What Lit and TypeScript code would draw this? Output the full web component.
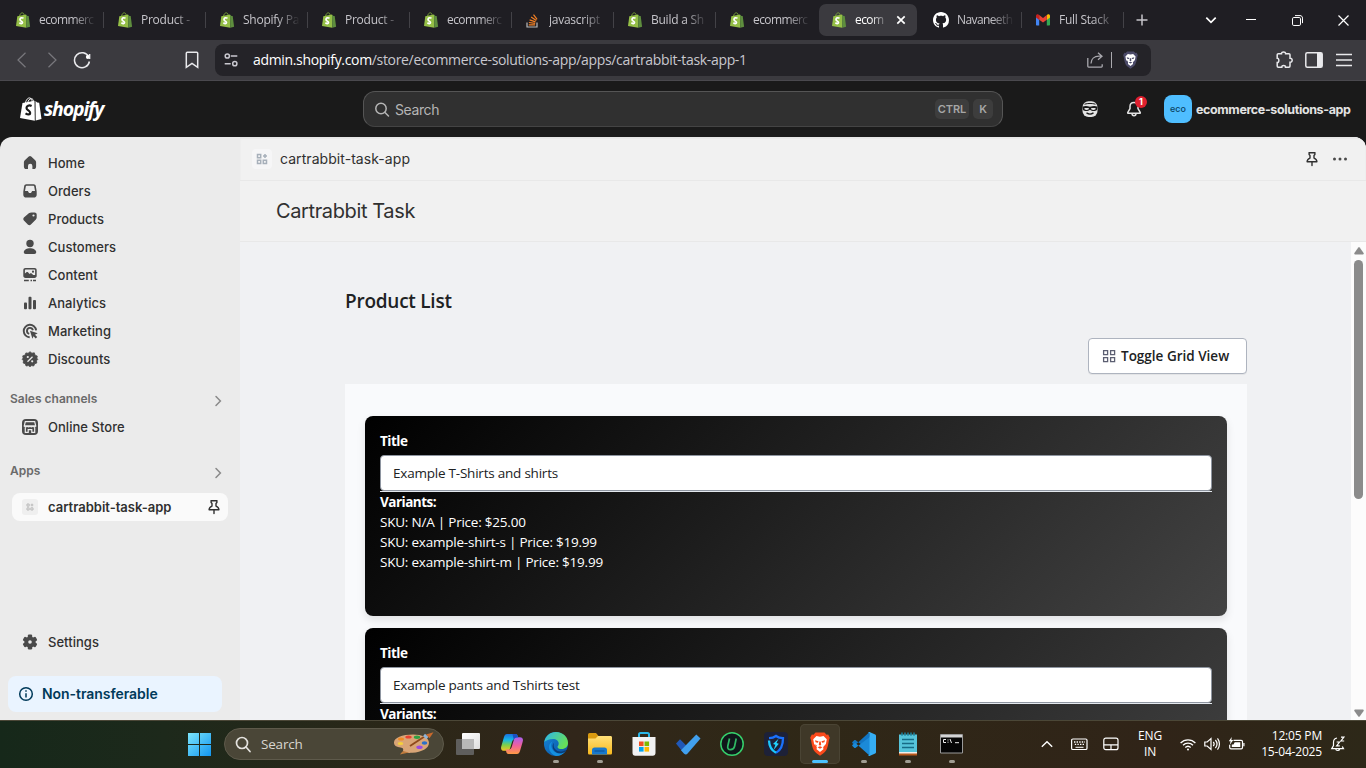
import { LitElement, html, css, svg } from "lit";
import { customElement } from "lit/decorators.js";
import { classMap } from "lit/directives/class-map.js";

const bag = html`<svg width="16" height="16" viewBox="0 0 16 16">
  <path d="M4.6 4.2C4.9 1.9 6.3.6 7.6.9c1.2.2 1.5 1.5 1.6 2.7" fill="none" stroke="#7da93a" stroke-width=".9"/>
  <path d="M2.3 4.3 11 2.6l.3 13.2L1 13.9z" fill="#95bf47"/>
  <path d="m11 2.6 1.5 1.3 1.2.2 1.4 10.6-3.8 1.1z" fill="#5e8e3e"/>
  <path d="M8.500 6.200C6.800 5.300 5 5.900 5 7.500c0 1.600 2.500 1.600 2.500 3.100 0 1.300-1.700 1.200-3.100.2" fill="none" stroke="#fff" stroke-width="1.700"/>
</svg>`;

const stackIcon = html`<svg width="16" height="16" viewBox="0 0 16 16" fill="none">
  <path d="M2 10.500v4.500h10v-4.500" stroke="#bcbbbb" stroke-width="1.200"/>
  <path d="M3.800 12.900h6.300M3.900 10.500l6.300.8M4.600 7.900l5.900 2M6.100 5l5.200 3.500M8.500 2.700l3.600 4.600" stroke="#f48024" stroke-width="1.200"/>
</svg>`;

const githubIcon = html`<svg width="16" height="16" viewBox="0 0 16 16" fill="#fff"><path d="M8 0C3.580 0 0 3.580 0 8c0 3.540 2.290 6.530 5.470 7.590.4.070.55-.17.55-.38 0-.19-.01-.82-.01-1.490-2.010.37-2.530-.49-2.690-.94-.09-.23-.48-.94-.82-1.130-.28-.15-.68-.52-.01-.53.63-.01 1.080.58 1.230.82.72 1.210 1.870.87 2.330.66.070-.52.28-.87.51-1.070-1.780-.2-3.640-.89-3.640-3.950 0-.87.31-1.590.82-2.150-.08-.2-.36-1.020.08-2.120 0 0 .67-.21 2.200.82.64-.18 1.320-.27 2-.27s1.360.09 2 .27c1.530-1.040 2.200-.82 2.200-.82.44 1.100.16 1.920.08 2.120.51.56.82 1.270.82 2.150 0 3.070-1.870 3.750-3.650 3.950.29.25.54.73.54 1.480 0 1.070-.01 1.930-.01 2.200 0 .21.15.46.55.38A8.010 8.010 0 0 0 16 8c0-4.420-3.580-8-8-8z"/></svg>`;

const gmailIcon = html`<svg width="16" height="16" viewBox="0 0 16 16">
  <path d="M1 4v8.500c0 .6.400 1 1 1h2.200V6.500z" fill="#4285f4"/>
  <path d="M15 4v8.500c0 .6-.4 1-1 1h-2.200V6.500z" fill="#34a853"/>
  <path d="M11.800 3.300V7.900L15 5.500V4c0-1.700-1.800-2-2.700-1.300z" fill="#fbbc04"/>
  <path d="M1 4c0-1.700 1.800-2 2.700-1.300l.5.5v4.700L1 5.500z" fill="#c5221f"/>
  <path d="M4.200 3.100 8 6l3.800-2.900v4.600L8 10.500 4.200 7.700z" fill="#ea4335"/>
</svg>`;

const lion = (body: string, face: string, w: number, h: number) => html`<svg width=${w} height=${h} viewBox="0 0 20 24">
  <path d="M5.500.5h9l2 2.200 1.700-.3 1.600 3.400-.8 2.200c-.6 4-1.600 8.500-2.800 10.300C14.800 20.600 11.500 22.600 10 23.800 8.500 22.600 5.200 20.600 3.800 18.300 2.600 16.500 1.600 12 1 8L.2 5.800l1.600-3.400 1.700.3z" fill=${body}/>
  <path d="M6.500 4 10 4.800 13.500 4l3.300 3.300-.9 4.700-2.700 3.100.2 2.100-3.400 2.800-3.400-2.800.2-2.100L4.100 12l-.9-4.700z" fill=${face}/>
  <path d="m5 8.300 3.600 1-.7 1.500-2.300-.6zM15 8.300l-3.600 1 .7 1.500 2.300-.6zM9.300 9.500h1.400l.5 3.200-1.200 1-1.200-1zM7.600 15.200l2.400-.9 2.400.9-2.400 1.500zM4.800 12.200l2.100 1.400-.8.900z" fill=${body}/>
</svg>`;

const pin = html`<svg width="20" height="20" viewBox="0 0 20 20" fill="none" stroke="#303030" stroke-width="1.400" stroke-linejoin="round" stroke-linecap="round">
  <path d="M7 3.700h6M7.100 3.900v1.600l.9 1v2.600c-1.500.6-2.900 1.700-2.900 3.600h9.800c0-1.900-1.400-3-2.900-3.600V6.500l.9-1V3.900M10 12.900v3.600"/>
</svg>`;

const appGlyph = (size: number, color: string) => html`<svg width=${size} height=${size} viewBox="0 0 12 12" fill="none" stroke=${color} stroke-width="1.500">
  <path d="M1.500 1.500h3.200v3.200H1.500zM1.500 7.300h3.200v3.200H1.500zM7.300 7.300h3.200v3.200H7.300zM9 1v4M7 3h4"/>
</svg>`;

const nav = [
  { label: "Home", icon: svg`<path d="M8.800 3.500a1.800 1.800 0 0 1 2.400 0l4 3.700c.6.500.9 1.200.9 2v4.300c0 1.700-.9 2.600-2.500 2.600h-1.200v-3.200a2.200 2.200 0 0 0-4.400 0v3.200H6.400c-1.600 0-2.500-.9-2.500-2.600V9.200c0-.8.3-1.500.9-2z"/>` },
  { label: "Orders", icon: svg`<path fill-rule="evenodd" d="M6.300 3.200h7.400c1 0 1.900.8 2.100 1.800l.9 5.500v3.200c0 1.700-1.200 2.900-2.900 2.900H6.200c-1.700 0-2.900-1.200-2.900-2.900v-3.200L4.200 5c.2-1 1.100-1.800 2.100-1.800zm.2 1.600c-.4 0-.6.200-.7.600L5 10.100h2.500c.5 0 .6.500 1 1.100.3.600.8.900 1.500.9s1.200-.3 1.500-.9c.4-.6.500-1.100 1-1.100H15l-.8-4.700c-.1-.4-.3-.6-.7-.6z"/>` },
  { label: "Products", icon: svg`<path fill-rule="evenodd" d="M11.500 3.500h3.100c1.200 0 2.100.9 2.100 2.100v2.900c0 .8-.3 1.500-.8 2l-5 5c-.9.9-2.200.9-3.100 0L3.900 11.600c-.8-.8-.8-2.100 0-3l4.900-4.400c.8-.5 1.600-.7 2.700-.7zm2 4.100a1.100 1.100 0 1 0 0-2.200 1.100 1.100 0 0 0 0 2.200z"/>` },
  { label: "Customers", icon: svg`<circle cx="10" cy="6.500" r="3.700"/><path d="M10 11.300c3 0 6.200 1.500 6.200 4 0 1.200-.8 1.700-1.800 1.700H5.600c-1 0-1.800-.5-1.800-1.700 0-2.500 3.200-4 6.200-4z"/>` },
  { label: "Content", icon: svg`<path fill-rule="evenodd" d="M5.500 3h9c1.400 0 2.200.9 2.200 2.200v5.600c0 1.300-.8 2.200-2.200 2.200h-9c-1.400 0-2.200-.9-2.200-2.200V5.200C3.300 3.900 4.100 3 5.500 3zm.2 1.500c-.5 0-.8.300-.8.800v3.100l1.800-1.300c.5-.3 1-.2 1.300.2l1.500 1.600.9-.6c.4-.2.8-.2 1.200.1l1.600 1.500 1.900.1V5.300c0-.5-.3-.8-.8-.8zM13 7.800a1.100 1.100 0 1 0 0-2.200 1.100 1.100 0 0 0 0 2.200z"/><path d="M4 14.700h4.800v1.500H4zM10.500 14.700H12v1.500h-1.500zM13 14.700h3v1.500h-3z"/>` },
  { label: "Analytics", icon: svg`<rect x="4" y="9.500" width="3" height="6.700" rx=".9"/><rect x="8.500" y="3.800" width="3" height="12.400" rx=".9"/><rect x="13" y="7" width="3" height="9.200" rx=".9"/>` },
  { label: "Marketing", icon: svg`<g fill="none" stroke="#4a4a4a" stroke-width="1.900"><path d="M16.100 9.300A6.200 6.200 0 1 0 9.700 16.200"/><path d="M12.900 9.200a3 3 0 1 0-3.700 3.600"/></g><path d="m10 9.700 7.700 2.600-2.700 1.400 2.200 2.200-1.500 1.500-2.200-2.200-1.100 2.500z"/>` },
  { label: "Discounts", icon: svg`<path stroke="#4a4a4a" stroke-width=".8" stroke-linejoin="round" d="m10 2.700 1.900 1.500 2.400-.4.800 2.400 2.200.9-.5 2.100 1 1.100-1.300 1.500.3 2.200-2.100.8-1 2.200-2.100-.4L10 17.700l-1.600-1.100-2.300.4-.8-2.200-2.100-.8.3-2.200-1.300-1.500 1-1.300-.5-2.100 2.400-.8.8-2.200 2.200.4z"/><path d="m7.500 12.700 5-5" stroke="#ebebeb" stroke-width="1.300"/><circle cx="7.800" cy="8" r="1.100" fill="#ebebeb"/><circle cx="12.200" cy="12.300" r="1.100" fill="#ebebeb"/>` },
];

const gearTeeth = [0, 60, 120, 180, 240, 300];
const gear = svg`${gearTeeth.map((a) => svg`<rect x="7.800" y="2.600" width="4.400" height="4.600" rx="1.200" transform=${`rotate(${a} 10 10)`}/>`)}<circle cx="10" cy="10" r="3.700" fill="none" stroke="#4a4a4a" stroke-width="3.800"/>`;

const tabs: { icon: unknown; label: string; active?: boolean; bare?: boolean; tight?: boolean }[] = [
  { icon: bag, label: "ecommerc", tight: true },
  { icon: bag, label: "Product - " },
  { icon: bag, label: "Shopify Pa" },
  { icon: bag, label: "Product - " },
  { icon: bag, label: "ecommerc", tight: true },
  { icon: stackIcon, label: "javascript" },
  { icon: bag, label: "Build a Sh" },
  { icon: bag, label: "ecommerc", bare: true, tight: true },
  { icon: bag, label: "ecom", active: true, bare: true, tight: true },
  { icon: githubIcon, label: "Navaneeth", tight: true },
  { icon: gmailIcon, label: "Full Stack" },
];

const products = [
  { title: "Example T-Shirts and shirts", variants: [["N/A", "25.00"], ["example-shirt-s", "19.99"], ["example-shirt-m", "19.99"]] },
  { title: "Example pants and Tshirts test", variants: [] },
];

const dock: { icon: unknown; state: string }[] = [
  { state: "", icon: html`<svg width="26" height="26" viewBox="0 0 26 26"><defs><linearGradient id="tv" x2="1" y2="1"><stop stop-color="#fff"/><stop offset="1" stop-color="#ddd"/></linearGradient></defs><rect x="7" y="2" width="18" height="16" rx="1" fill="url(#tv)"/><rect x="1" y="8" width="18" height="16" rx="1" fill="#666" fill-opacity=".88"/><path d="M7 8h12v10H7z" fill="#b8b8b8"/></svg>` },
  { state: "", icon: html`<svg width="24" height="24" viewBox="0 0 24 24"><defs><linearGradient id="c1" x2="0" y2="1"><stop stop-color="#1a6fe0"/><stop offset=".35" stop-color="#16b8e8"/><stop offset=".65" stop-color="#7bd04a"/><stop offset="1" stop-color="#f5c622"/></linearGradient><linearGradient id="c2" x2="0" y2="1"><stop stop-color="#a960f0"/><stop offset=".5" stop-color="#f0609c"/><stop offset="1" stop-color="#ff9a44"/></linearGradient></defs>
    <path d="M7 2h8.500c1.500 0 2 1 2.300 2.500L18.500 7h-3c-2 0-2.900 1-3.500 3l-1.800 6c-.6 2-1.500 2.800-3.200 2.800H4c-2.500 0-3.500-2-2.700-4.500L4 5c.6-2 1.500-3 3-3z" fill="url(#c1)"/>
    <path d="M17 22H8.500C7 22 6.500 21 6.200 19.500L5.700 17.500h3c2 0 2.700-1.500 3.300-3.500l1.800-6c.6-2 1.500-2.800 3.200-2.800H20c2.500 0 3.500 2 2.700 4.500L20 19c-.6 2-1.500 3-3 3z" fill="url(#c2)"/><path d="M12.500 2h3c1.500 0 2 1 2.300 2.500l.4 1.200c-2.400-.4-3.500.3-4.400 2.300z" fill="#1b4fc4"/></svg>` },
  { state: "run", icon: html`<svg width="24" height="24" viewBox="0 0 24 24"><defs><linearGradient id="e1" x2="1" y2=".5"><stop stop-color="#2bb5ef"/><stop offset="1" stop-color="#67df58"/></linearGradient><linearGradient id="e2" x2="1" y2="1"><stop stop-color="#1687d9"/><stop offset="1" stop-color="#0a4f9e"/></linearGradient></defs>
    <circle cx="12" cy="12" r="12" fill="url(#e2)"/><path d="M.3 10C1.300 4 6 0 12 0c7 0 12 5 12 11 0 3.800-2.800 6-6.200 6-2.800 0-4.300-1.100-4.300-2.100 0-.8 1.200-1.200 1.200-3.400C14.700 9 12.300 7 9 7 5 7 1.700 8.500.3 10z" fill="url(#e1)"/><path d="M8.700 9.500C6 12 7 18 12 20.500c3 1.500 7 1 9.500-1.500-2.200 3.300-5.700 5-9.500 5-3-.7-7-4-7-9 0-2.700 1.700-4.800 3.700-5.500z" fill="#1490df"/><path d="M10 11c-1.500 4 1.500 8.500 6.500 8.500 2.300 0 4.300-.6 5.600-1.500l-.6 1.500c-3 2.500-7.500 2.200-10 .2C8.500 17.500 7.600 13 10 11z" fill="#093d78"/></svg>` },
  { state: "run", icon: html`<svg width="26" height="26" viewBox="0 0 26 26"><defs><linearGradient id="f1" x2="0" y2="1"><stop stop-color="#ffe07a"/><stop offset="1" stop-color="#f9b91d"/></linearGradient></defs><path d="M1 4c0-1.200.6-2 1.600-2H9l2.500 3h5V9H1z" fill="#d99a10"/><path d="M1 7.500h7.500L11 5h12.500c1 0 1.500.6 1.500 1.500V22c0 1-.6 1.500-1.500 1.500h-21C1.600 23.500 1 23 1 22z" fill="url(#f1)"/><path d="M5 23.500V19c0-1.600 1-2.500 2.500-2.500h10c1.600 0 2.500 1 2.500 2.500v4.500z" fill="#1878cc"/><path d="M7.500 19.500h10v1h-10z" fill="#0b4d91"/></svg>` },
  { state: "", icon: html`<svg width="26" height="26" viewBox="0 0 26 26"><path d="M8 7V3.500C8 2.600 8.600 2 9.500 2h7c.9 0 1.500.6 1.500 1.500V7" fill="none" stroke="#29b6e8" stroke-width="2"/><path d="M1.500 6h23v16c0 1.600-1 2.700-2.700 2.700H4.200c-1.700 0-2.700-1.100-2.700-2.700z" fill="#f1f1f2"/><path d="M8 10.500h4.600v4.600H8z" fill="#f25022"/><path d="M13.500 10.500h4.600v4.600h-4.600z" fill="#7fba00"/><path d="M8 16h4.600v4.600H8z" fill="#00a4ef"/><path d="M13.500 16h4.600v4.600h-4.600z" fill="#ffb900"/></svg>` },
  { state: "", icon: html`<svg width="26" height="26" viewBox="0 0 26 26"><path d="m1 12.500 4-4.200 8 8-3.800 6.500z" fill="#2058b8"/><path d="m6 19.300 4.100-4.300L21.300 3.600 25.500 7.600 12.600 22.500c-1 1.100-2.400 1.200-3.400.2z" fill="#41a0ee"/></svg>` },
  { state: "", icon: html`<svg width="24" height="24" viewBox="0 0 24 24" fill="none"><circle cx="12" cy="12" r="11.200" fill="#10171a" stroke="#36d06c" stroke-width="1.500"/><path d="M9.500 6.500 7.800 14c-.5 2.300.6 3.600 2.700 3.600s3.600-1.200 4.100-3.400L16.200 6.500" stroke="#2fb863" stroke-width="1.700"/></svg>` },
  { state: "", icon: html`<svg width="24" height="24" viewBox="0 0 24 24" fill="none"><rect width="24" height="24" rx="4" fill="#1d2138"/><path d="M5 6.200c3 0 5-.6 7-2.200 2 1.600 4 2.200 7 2.200 0 7-1.500 11.500-7 14.500" stroke="#1a72ff" stroke-width="2.300"/><path d="M12 20.700C7 18.200 5.200 14 5 8.500" stroke="#19c8ff" stroke-width="2.300"/><path d="M14.500 6.800 9 12l2.400.8L9.600 18l5.200-6.300-2.300-.7z" fill="#22d5ff"/></svg>` },
  { state: "on", icon: lion("#fb4a1c", "#fff", 20, 24) },
  { state: "run", icon: html`<svg width="26" height="26" viewBox="0 0 26 26"><path d="M18.500 1 4 14.200 1.500 12.200c-.5-.4-.5-.9-.1-1.300l1.800-1.700c.4-.4.8-.4 1.200-.1L20 21z" fill="#1276c4"/><path d="M19 25 4.200 11.700 1.500 13.800c-.5.400-.5.900-.1 1.300l1.800 1.700c.4.400.8.400 1.200.1L20 5z" fill="#1b8ad8"/><path d="m18.500 1 5.700 2.600c.5.200.8.600.8 1.200v16.400c0 .6-.3 1-.8 1.200L18.500 25c-.6.200-1 0-1.300-.3l1.300-1.200V2.500L17.200 1.300c.3-.3.7-.5 1.300-.3z" fill="#35aef5"/></svg>` },
  { state: "run", icon: html`<svg width="20" height="24" viewBox="0 0 20 24"><path d="M1 21h18v2.500H1z" fill="#b8581c"/><path d="M1 19h18v2.500H1z" fill="#f2ede8"/><path d="M1 2.500h18V20H1z" fill="#56c4da"/><path d="M4 .5v3.200M7 .5v3.200M10 .5v3.200M13 .5v3.200M16 .5v3.200" stroke="#1b83a0" stroke-width="1.500"/><path d="M4 7.500h12M4 11.500h12M4 15.500h12" stroke="#176b86" stroke-width="1.600"/></svg>` },
  { state: "run", icon: html`<svg width="24" height="20" viewBox="0 0 24 20"><path d="M.5.500h22v18.500H.5z" fill="#050505" stroke="#9a9a9a"/><path d="M1 1h21v2.500H1z" fill="#d4d4d4"/><path d="M6 5.500H3.500v3H6M8 5.500v1M8 7.700v1M10 5l1.500 4M15 8.700h4" stroke="#eee" fill="none"/></svg>` },
];

@customElement("app-root")
export class AppRoot extends LitElement {
  static styles = css`
    :host { display: block; width: 1366px; height: 768px; overflow: hidden; }
    * { box-sizing: border-box; }
    svg { display: block; flex: none; }
    .screen { display: flex; flex-direction: column; height: 768px; background: #1a1a1a; font-family: "Open Sans", "Noto Sans", sans-serif; }
    .center { display: flex; align-items: center; justify-content: center; flex: none; }

    .tabs { display: flex; height: 40px; padding: 4px 0 4px 2px; background: #1f1e23; flex: none; }
    .tab { display: flex; align-items: center; width: 102px; height: 32px; padding-left: 13px; flex: none; }
    .tab .name { width: 60px; margin-left: 8px; white-space: pre; font-size: 12px; letter-spacing: -0.25px; line-height: 20px; color: #c6c5ca; mask-image: linear-gradient(90deg, #000 34px, transparent 57px); }
    .tab .tight { letter-spacing: -0.6px; }
    .rule { width: 1px; height: 16px; background: #434247; margin-left: auto; flex: none; }
    .active { width: 98px; margin: 0 3px 0 1px; padding-left: 12px; background: #3b3a3f; border-radius: 7px; }
    .tab.active .name { width: 32px; color: #fff; mask-image: linear-gradient(90deg, #000 16px, transparent 34px); }
    .cross { margin-left: 9px; }
    .newtab { width: 36px; }
    .grow { flex: 1; }
    .win { width: 46px; }
    .menu { width: 40px; margin-right: -3px; }

    .toolbar { display: flex; align-items: center; height: 41px; padding: 0 7px; background: #3b3a3f; border-bottom: 1px solid #4a494e; flex: none; }
    .tool { width: 30px; height: 30px; }
    .book { margin-left: 80px; }
    .address { display: flex; align-items: center; width: 936px; height: 32px; margin-left: 8px; padding: 0 13px 0 7px; border-radius: 8px; background: #242328; flex: none; }
    .url { margin-left: 13px; font-size: 14px; letter-spacing: -0.33px; line-height: 20px; color: #c9c8cf; }
    .url b { font-weight: 400; color: #fff; }
    .split { width: 1px; height: 16px; background: #aaa9ae; margin: 0 11px 0 8px; }

    .header { display: flex; align-items: center; height: 56px; flex: none; font-family: Inter, sans-serif; color: #e3e3e3; }
    .brand { display: flex; align-items: center; width: 363px; padding-left: 20px; }
    .brand span { margin-left: 2px; font: italic 700 19.500px/24px "Open Sans", sans-serif; letter-spacing: -1.150px; color: #fff; }
    .search { display: flex; align-items: center; width: 640px; height: 36px; padding: 0 9px 0 10px; border: 1px solid #555; border-bottom-color: #444; border-radius: 12px; background: #303030; color: #b5b5b5; font-size: 14px; letter-spacing: -0.4px; flex: none; }
    .search span { margin-left: 4px; flex: 1; }
    .key { height: 20px; border-radius: 5px; background: #3d3d3d; color: #a6a6a6; font: 600 11px/20px Inter, sans-serif; letter-spacing: -0.1px; text-align: center; width: 20px; margin-left: 4px; }
    .ctrl { width: 34px; }
    .kit { width: 44px; height: 36px; position: relative; }
    .first { margin-left: 65px; }
    .badge { position: absolute; left: 23px; top: 5px; width: 12px; height: 12px; border-radius: 6px; background: #e0202f; color: #fff; font: 700 9px/12px Inter, sans-serif; text-align: center; }
    .avatar { width: 28px; height: 28px; margin-left: 8px; border-radius: 8px; background: #4fbeff; color: #0b4364; font: 500 9px/28px Inter, sans-serif; text-align: center; flex: none; }
    .store { margin-left: 4px; font-size: 12.500px; font-weight: 650; letter-spacing: -0.38px; white-space: nowrap; }

    .frame { display: flex; height: 583px; border-radius: 12px 12px 0 0; overflow: hidden; background: #ebebeb; flex: none; font-family: Inter, sans-serif; }
    .side { width: 240px; display: flex; flex-direction: column; padding-top: 12px; color: #303030; font-size: 13px; font-weight: 550; flex: none; }
    .row { display: flex; align-items: center; height: 28px; padding-left: 20px; letter-spacing: 0.04px; flex: none; }
    .row > span { margin-left: 8px; }
    .group { display: flex; align-items: center; height: 28px; padding: 0 12px 2px 10px; color: #6a6a6a; font-size: 12px; font-weight: 600; letter-spacing: 0; justify-content: space-between; flex: none; }
    .group svg { margin-top: 6px; }
    .channels { margin-top: 12px; }
    .apps { margin-top: 16px; }
    .current { width: 216px; margin: 8px 0 0 12px; padding: 0 4px 0 10px; border-radius: 8px; background: #fafafa; font-weight: 600; letter-spacing: 0; justify-content: space-between; }
    .chip { width: 16px; height: 16px; border-radius: 3px; background: #efefef; }
    .current > span:nth-child(2) { margin-left: 10px; flex: 1; }
    .settings { margin-top: 107px; }
    .notice { display: flex; align-items: center; width: 214px; height: 36px; margin: 20px 0 0 8px; padding-left: 8px; border-radius: 8px; background: #eaf4ff; color: #003a5a; font-size: 14px; font-weight: 600; letter-spacing: -0.05px; flex: none; }
    .notice span { margin-left: 6px; padding-bottom: 1px; }

    .main { flex: 1; display: flex; flex-direction: column; background: #f0f1f3; min-width: 0; }
    .appbar { display: flex; align-items: center; height: 44px; padding: 0 16px 0 12px; background: #f1f1f1; border-bottom: 1px solid #e8e8e8; box-shadow: inset 0 2px 2px #0000000d; font-size: 14px; letter-spacing: 0.06px; color: #303030; flex: none; }
    .appbar .tile { width: 20px; height: 20px; border-radius: 4px; background: #f6f6f7; margin-right: 8px; }
    .dots { margin-left: 8px; }
    .titlebar { height: 61px; padding: 0 36px; background: #f1f1f1; border-bottom: 1px solid #e8e8e8; font-size: 20px; line-height: 60px; color: #303030; letter-spacing: -0.38px; flex: none; }
    .view { display: flex; height: 478px; font-family: "Open Sans", "Noto Sans", sans-serif; color: #202223; }
    .content { flex: 1; padding: 45px 104px 0 105px; height: 478px; overflow: hidden; }
    h1 { margin: 0; font-size: 19px; line-height: 28px; font-weight: 600; letter-spacing: -0.25px; }
    .action { display: flex; justify-content: flex-end; margin-top: 23px; }
    .toggle { display: flex; align-items: center; width: 159px; height: 36px; padding: 0 10px; border: 1px solid #aeb4bf; border-radius: 4px; background: #fff; box-shadow: 0 1px 0 #0000000d; font-size: 13.500px; font-weight: 600; letter-spacing: 0; white-space: nowrap; }
    .toggle span { margin-left: 2px; }
    .panel { display: flex; flex-direction: column; gap: 12px; margin-top: 10px; padding: 32px 20px; background: #f9fafc; }
    .card { height: 200px; padding: 15px; border-radius: 8px; background: linear-gradient(135deg, #000, #434343); box-shadow: 0 4px 8px #0000001a; color: #fff; font-size: 13.500px; line-height: 20px; letter-spacing: -0.22px; flex: none; }
    .card b { display: block; letter-spacing: -0.5px; font-size: 13.500px; }
    .field { height: 37px; margin-top: 4px; border-bottom: 1px solid #e3e8ee; }
    .field div { height: 36px; padding: 0 12px; border: 1px solid #8e95a0; border-radius: 4px; background: #fff; color: #202223; line-height: 35px; }

    .scroll { display: flex; flex-direction: column; align-items: center; width: 15px; background: #fcfcfc; padding: 5px 0 3px; }
    .thumb { width: 9px; height: 239px; margin-top: 5px; border-radius: 5px; background: #8b8b8b; }
    .down { margin-top: auto; }

    .taskbar { display: flex; align-items: center; height: 48px; padding: 0 0 1px 177px; border-top: 1px solid #4b4737; background: linear-gradient(90deg, #16281a 0, #1d291b 12%, #2c2718 30%, #31261a 42%, #2f2817 55%, #302418 85%, #2d2818 100%); color: #fff; flex: none; }
    .cell { width: 44px; height: 46px; position: relative; }
    .find { display: flex; align-items: center; width: 220px; height: 32px; margin: 0 2px 0 3px; padding: 0 8px 0 10px; border: 1px solid #5e5a4b; border-radius: 16px; background: #4a4637; font-size: 13.500px; letter-spacing: -0.2px; color: #d8d6d0; flex: none; }
    .find span { margin-left: 9px; flex: 1; }
    .on { width: 40px; height: 40px; margin: 0 2px; border-radius: 5px; background: #3f3828; box-shadow: inset 0 0 0 1px #4a4434; }
    .mark { position: absolute; left: 19px; bottom: 4px; width: 6px; height: 3px; border-radius: 2px; background: #a19d93; }
    .on .mark { left: 12px; bottom: 1px; width: 16px; background: #4cc2ff; }
    .tray { display: flex; align-items: center; margin-left: auto; padding-right: 18px; font-size: 12px; line-height: 16px; letter-spacing: -0.18px; }
    .icon { width: 32px; }
    .small { width: 24px; }
    .lang { width: 46px; margin-right: 3px; text-align: center; line-height: 16px; }
    .clock { width: 74px; text-align: right; white-space: nowrap; margin-right: 8px; }
  `;

  private chevron() {
    return html`<svg width="20" height="20" viewBox="0 0 20 20" fill="none" stroke="#8a8a8a" stroke-width="1.500" stroke-linecap="round"><path d="m8 5.500 4.400 4.500L8 14.500"/></svg>`;
  }

  private navIcon(shape: unknown) {
    return html`<svg width="20" height="20" viewBox="0 0 20 20" fill="#4a4a4a">${shape}</svg>`;
  }

  private browser() {
    return html`
      <div class="tabs">
        ${tabs.map((t) => html`<div class=${classMap({ tab: true, active: !!t.active })}>
          ${t.icon}<span class=${classMap({ name: true, tight: !!t.tight })}>${t.label}</span>
          ${t.active ? html`<svg class="cross" width="10" height="10" viewBox="0 0 10 10" stroke="#fff" stroke-width="1.700"><path d="m1.300 1.300 7.400 7.400M8.700 1.300 1.300 8.700"/></svg>` : ""}
          ${t.bare ? "" : html`<i class="rule"></i>`}
        </div>`)}
        <div class="center newtab"><svg width="12" height="12" viewBox="0 0 12 12" stroke="#c6c5ca" stroke-width="1.500"><path d="M6 .5v11M.5 6h11"/></svg></div>
        <div class="grow"></div>
        <div class="center menu"><svg width="12" height="12" viewBox="0 0 12 12" fill="none" stroke="#fff" stroke-width="1.700"><path d="m1.300 3.700 4.700 4.600 4.700-4.600"/></svg></div>
        <div class="center win"><svg width="10" height="10" viewBox="0 0 10 10" stroke="#fff"><path d="M0 4.500h10"/></svg></div>
        <div class="center win"><svg width="11" height="11" viewBox="0 0 11 11" fill="none" stroke="#fff"><rect x=".5" y="2.500" width="8" height="8" rx="1.300"/><path d="M3 .6h5c1.500 0 2.500 1 2.500 2.500v5"/></svg></div>
        <div class="center win"><svg width="11" height="11" viewBox="0 0 11 11" stroke="#fff" stroke-width="1.200"><path d="m.5.500 10 10M10.500.500l-10 10"/></svg></div>
      </div>
      <div class="toolbar">
        <div class="center tool"><svg width="16" height="16" viewBox="0 0 16 16" fill="none" stroke="#79787d" stroke-width="1.200"><path d="M11.500.800 4 8l7.500 7.200"/></svg></div>
        <div class="center tool"><svg width="16" height="16" viewBox="0 0 16 16" fill="none" stroke="#79787d" stroke-width="1.200"><path d="M4.500.800 12 8l-7.500 7.200"/></svg></div>
        <div class="center tool"><svg width="18" height="18" viewBox="0 0 18 18" fill="none" stroke="#e9e9ec" stroke-width="1.500"><path d="M15.700 5.800A7.500 7.500 0 1 0 16.400 10.500"/><circle cx="14.800" cy="6" r="1.900" fill="#fff" stroke="none"/><path d="M16.600 3v5"/></svg></div>
        <div class="center tool book"><svg width="14" height="18" viewBox="0 0 14 18" fill="none" stroke="#e9e9ec" stroke-width="1.500"><path d="M1.300 2.300c0-.7.400-1 1-1h9.400c.6 0 1 .3 1 1v14L7 12.300l-5.700 4z"/></svg></div>
        <div class="address">
          <svg width="18" height="18" viewBox="0 0 18 18" fill="none" stroke="#c9c8cf" stroke-width="1.500"><circle cx="5.300" cy="5" r="2.100"/><path d="M8.800 5h6.500M2.700 12.700h6"/><circle cx="12.800" cy="12.700" r="2.100"/></svg>
          <span class="url"><b>admin.shopify.com</b>/store/ecommerce-solutions-app/apps/cartrabbit-task-app-1</span>
          <span class="grow"></span>
          <svg width="16" height="16" viewBox="0 0 16 16" fill="none" stroke="#a9a8ae" stroke-width="1.300"><path d="M.8 6v8.300c0 .5.300.8.800.8h12.800c.5 0 .8-.3.800-.8v-2M4 11.500c0-4.500 3.300-7.300 8-7.300h2.500M11 .700l4 3.500-4 3.500"/></svg>
          <i class="split"></i>
          ${lion("#4b4a68", "#fff", 15, 18)}
        </div>
        <div class="grow"></div>
        <div class="center tool"><svg width="18" height="18" viewBox="0 0 18 18" fill="none" stroke="#e9e9ec" stroke-width="1.500"><path d="M3.300 2.700h3.200c-.2-2.400 4.300-2.400 4.100 0h3.300c.7 0 1.100.4 1.100 1.100v3.400c2.900-.2 2.900 4.300 0 4.100v3.800c0 .7-.4 1.100-1.100 1.100h-3.400c.2-2.400-3.900-2.400-3.700 0H3.300c-.7 0-1.100-.4-1.100-1.100v-3.500c2.200.2 2.200-4.500 0-4.300V3.800c0-.7.400-1.100 1.100-1.100z"/></svg></div>
        <div class="center tool"><svg width="18" height="16" viewBox="0 0 18 16"><rect x=".8" y=".8" width="16.400" height="14.400" rx="1.500" fill="none" stroke="#e9e9ec" stroke-width="1.500"/><path d="M12 1h5v14h-5z" fill="#e9e9ec"/></svg></div>
        <div class="center tool"><svg width="16" height="14" viewBox="0 0 16 14" stroke="#e9e9ec" stroke-width="1.500"><path d="M0 1.500h16M0 7h16M0 12.500h16"/></svg></div>
      </div>`;
  }

  private header() {
    return html`<div class="header">
      <div class="brand">
        <svg width="22" height="24" viewBox="0 0 22 24"><path d="M5.500 6C6 2.700 8 .6 9.900 1c1.700.3 2.200 2.200 2.300 4M7.700 5.500c.6-2.200 2-3.700 3.700-3.700 1.500 0 2 1.200 2.200 2.800" fill="none" stroke="#fff" stroke-width="1"/><path d="m2.500 6 12-2.200.3 20L0 21z" fill="#fff"/><path d="m15.500 4 1.700 1.500 2 .3L21.500 22l-5.800 1.600z" fill="#fff"/><path d="M11.600 9C9 7.800 6.500 8.800 6.500 11c0 2.400 3.700 2.500 3.700 4.900 0 2-2.400 1.900-4.700.4" fill="none" stroke="#1a1a1a" stroke-width="2.200"/></svg>
        <span>shopify</span>
      </div>
      <div class="search">
        <svg width="17" height="17" viewBox="0 0 17 17" fill="none" stroke="#b5b5b5" stroke-width="1.500" stroke-linecap="round"><circle cx="7" cy="7.500" r="5.200"/><path d="m11 11.500 3.500 3.500"/></svg>
        <span>Search</span><div class="key ctrl">CTRL</div><div class="key">K</div>
      </div>
      <div class="center kit first"><svg width="18" height="18" viewBox="0 0 18 18"><rect x="1.500" y="1.300" width="15" height="15.700" rx="6" fill="#e3e3e3"/><path d="M3.500 4.200c3.500-1 7.500-1 11 0" stroke="#1a1a1a" stroke-width="1" fill="none"/><path d="M1.300 6.700c2.200-.8 4.700-.8 7.700 0 3-.8 5.500-.8 7.700 0l-.8 3.300c-1.500 1.500-5.100 1.400-6.900-.3-1.800 1.700-5.400 1.800-6.900.3z" fill="#1a1a1a"/><path d="M3.500 7.900h4.300v1.400c-1.300.9-3.200.9-4.300 0zM10.200 7.900h4.300v1.400c-1.100.9-3 .9-4.300 0z" fill="#e3e3e3"/><path d="M5.500 12.900c2 1.300 5 1.300 7 0" stroke="#1a1a1a" stroke-width="1.300" fill="none"/></svg></div>
      <div class="center kit"><svg width="20" height="20" viewBox="0 0 20 20" fill="none" stroke="#e3e3e3" stroke-width="1.500" stroke-linejoin="round"><path d="M10 3.500c-2.500 0-4 1.800-4 4v2.200L3.800 13.300c-.3.600 0 1 .6 1h11.200c.6 0 .9-.4.6-1L14 9.700V7.500c0-2.200-1.500-4-4-4zM8 14.500c0 1.400.8 2.200 2 2.200s2-.8 2-2.200"/></svg><span class="badge">1</span></div>
      <div class="avatar">eco</div><div class="store">ecommerce-solutions-app</div>
    </div>`;
  }

  private sidebar() {
    return html`<div class="side">
      ${nav.map((n) => html`<div class="row">${this.navIcon(n.icon)}<span>${n.label}</span></div>`)}
      <div class="group channels">Sales channels${this.chevron()}</div>
      <div class="row"><svg width="20" height="20" viewBox="0 0 20 20" fill="none" stroke="#ebebeb" stroke-width="1.200"><rect x="2" y="2" width="16" height="16" rx="4" fill="#4a4a4a" stroke="none"/><path d="M5.300 4.600h9.400l1 4.200H4.300zM4.300 8.500c.2 2 2.700 2 2.900 0 .2 2 2.600 2 2.800 0 .2 2 2.600 2 2.800 0 .2 2 2.700 2 2.900 0M5.300 10.500v4.900h2.900v-2.700h3.600v2.700h2.900v-4.900"/></svg><span>Online Store</span></div>
      <div class="group apps">Apps${this.chevron()}</div>
      <div class="row current"><div class="center chip">${appGlyph(8, "#b9b9b9")}</div><span>cartrabbit-task-app</span>${pin}</div>
      <div class="row settings">${this.navIcon(gear)}<span>Settings</span></div>
      <div class="notice"><svg width="20" height="20" viewBox="0 0 20 20" fill="none" stroke="#003a5a" stroke-width="1.500"><circle cx="10" cy="10" r="6.300"/><path d="M10 9.300v4.200M10 6.300v1.500"/></svg><span>Non-transferable</span></div>
    </div>`;
  }

  private main() {
    return html`<div class="main">
      <div class="appbar"><div class="center tile">${appGlyph(12, "#a7b0ba")}</div>cartrabbit-task-app<span class="grow"></span>${pin}<svg class="dots" width="20" height="20" viewBox="0 0 20 20" fill="#4a4a4a"><circle cx="4.500" cy="10" r="1.500"/><circle cx="10" cy="10" r="1.500"/><circle cx="15.500" cy="10" r="1.500"/></svg></div>
      <div class="titlebar">Cartrabbit Task</div>
      <div class="view">
        <div class="content">
          <h1>Product List</h1>
          <div class="action"><div class="toggle"><svg width="20" height="20" viewBox="0 0 20 20" fill="none" stroke="#5c5f72" stroke-width="1.300"><path d="M4.600 4.600h4v4h-4zM11.600 4.600h4v4h-4zM4.600 11.600h4v4h-4zM11.600 11.600h4v4h-4z"/></svg><span>Toggle Grid View</span></div></div>
          <div class="panel">
            ${products.map((p) => html`<div class="card">
              <b>Title</b>
              <div class="field"><div>${p.title}</div></div>
              <b>Variants:</b>
              ${p.variants.map(([sku, price]) => html`<div>SKU: ${sku} | Price: $${price}</div>`)}
            </div>`)}
          </div>
        </div>
        <div class="scroll">
          <svg width="10" height="8" viewBox="0 0 10 8" fill="#8b8b8b"><path d="M4.300.6c.4-.5 1-.5 1.400 0L9.600 6c.4.700.1 1.500-.7 1.500H1.100C.3 7.500 0 6.700.400 6z"/></svg>
          <div class="thumb"></div>
          <svg class="down" width="10" height="8" viewBox="0 0 10 8" fill="#8b8b8b"><path d="M4.300 7.400c.4.500 1 .5 1.400 0L9.600 2c.4-.7.1-1.500-.7-1.500H1.100C.3.500 0 1.300.4 2z"/></svg>
        </div>
      </div>
    </div>`;
  }

  private taskbar() {
    return html`<div class="taskbar">
      <div class="center cell"><svg width="24" height="24" viewBox="0 0 24 24"><defs><linearGradient id="w" gradientUnits="userSpaceOnUse" x2="24" y2="24"><stop stop-color="#80e8fb"/><stop offset="1" stop-color="#1296f0"/></linearGradient></defs><path d="M1 1h11v11H1zM13 1h11v11H13zM1 13h11v11H1zM13 13h11v11H13z" fill="url(#w)"/></svg></div>
      <div class="find">
        <svg width="17" height="17" viewBox="0 0 17 17" fill="none" stroke="#e4e2de" stroke-width="1.700" stroke-linecap="round"><circle cx="7" cy="7" r="5.500"/><path d="m11 11 4 4.500"/></svg>
        <span>Search</span>
        <svg width="42" height="24" viewBox="0 0 42 24"><path d="M20 2.500C9 2.500 1 6 1 10.500 1 14 4 15 7.500 15.500c3 .4 3 1.700 2.500 3.500 2 2.300 6 2 9.500 1.800 9-.5 16.500-4.300 16.500-10C36 5.500 29 2.500 20 2.500z" fill="#d9a577"/><path d="M10 19c-.6 1-2.200 1.800-3 3.500l9-1.900z" fill="#c07b3d"/><ellipse cx="8" cy="7" rx="3" ry="1.600" fill="#f08a24"/><ellipse cx="15.500" cy="5" rx="3.200" ry="1.600" fill="#e8412f"/><ellipse cx="24" cy="5.300" rx="3.200" ry="1.700" fill="#2ea043"/><ellipse cx="7.500" cy="11.500" rx="2.800" ry="1.600" fill="#f5d03a"/><ellipse cx="31.500" cy="11" rx="2.800" ry="1.700" fill="#2a70c8"/><ellipse cx="26.500" cy="15.200" rx="3.200" ry="1.800" fill="#9a4ae0"/><path d="M17 14 33 3.500" stroke="#8e4a1c" stroke-width="1.800"/><path d="m31 3 3.500 3" stroke="#8fb4d8" stroke-width="3"/><path d="m33 2.500 7.500-2.300-4 6z" fill="#c96a2d"/></svg>
      </div>
      ${dock.map((d) => html`<div class=${classMap({ center: true, cell: true, on: d.state === "on" })}>${d.icon}${d.state ? html`<i class="mark"></i>` : ""}</div>`)}
      <div class="tray">
        <div class="center icon"><svg width="12" height="8" viewBox="0 0 12 8" fill="none" stroke="#fff" stroke-width="1.400"><path d="m.8 6.700 5.200-5 5.200 5"/></svg></div>
        <div class="center icon"><svg width="17" height="13" viewBox="0 0 17 13" fill="none" stroke="#fff"><rect x=".6" y="1" width="15.400" height="10.500" rx="1.300" stroke-width="1.200"/><path d="M3 4h11M3.800 6.300h10" stroke-dasharray="1.400 1.200" stroke-width="1.300"/><path d="M4.500 9.300h8"/></svg></div>
        <div class="center icon"><svg width="16" height="14" viewBox="0 0 16 14" fill="none" stroke="#fff" stroke-width="1.200"><rect x=".8" y="1.200" width="14.200" height="11.500" rx="2"/><path d="M.8 7.800h14.200M8 7.800v5"/></svg></div>
        <div class="lang">ENG<br>IN</div>
        <div class="center icon small"><svg width="16" height="13" viewBox="0 0 16 13" fill="none" stroke="#fff" stroke-width="1.300"><path d="M.6 5A10.300 10.300 0 0 1 15.400 5M3 7.300a7 7 0 0 1 10 0M5.300 9.500a3.900 3.900 0 0 1 5.400 0"/><circle cx="8" cy="11.500" r="1" fill="#fff" stroke="none"/></svg></div>
        <div class="center icon small"><svg width="17" height="14" viewBox="0 0 17 14" fill="none" stroke="#fff" stroke-width="1.200"><path d="M.8 5h2.400L7 1.500v11L3.200 9H.8zM9.300 4.800c1 1.300 1 3.100 0 4.400M11.400 3c1.900 2.300 1.900 5.700 0 8M13.500 1.300c2.600 3.300 2.600 8.100 0 11.400"/></svg></div>
        <div class="center icon small"><svg width="17" height="14" viewBox="0 0 17 14" fill="none" stroke="#fff" stroke-width="1.200"><path d="M5.500 3.300h7.700c.8 0 1.300.5 1.300 1.300v6c0 .8-.5 1.300-1.300 1.300H3c-.8 0-1.300-.5-1.300-1.300V7.700"/><path d="M15.900 6v3.200"/><path d="M6.700 5.200h5.600v4.900H3.800V7.500h1.700z" fill="#fff" stroke="none"/><path d="M3.700 0 .8 4.300h1.800L1.800 7.700 5.300 3H3.400z" fill="#fff" stroke="none"/></svg></div>
        <div class="clock">12:05 PM<br>15-04-2025</div>
        <svg width="18" height="17" viewBox="0 0 18 17" fill="none" stroke="#fff" stroke-width="1.200"><path d="M7 2C4.700 2.400 3.500 4.200 3.500 6.300v3.200L1.700 12.700h11.800L12.300 10.500M5.700 13c.3 2 3.500 2 4 0M6.600 6h2.900L6.600 9.800h3.200M11 1.200h2.900L11 5h3.200"/></svg>
      </div>
    </div>`;
  }

  render() {
    return html`<div class="screen">
      ${this.browser()}
      ${this.header()}
      <div class="frame">${this.sidebar()}${this.main()}</div>
      ${this.taskbar()}
    </div>`;
  }
}
